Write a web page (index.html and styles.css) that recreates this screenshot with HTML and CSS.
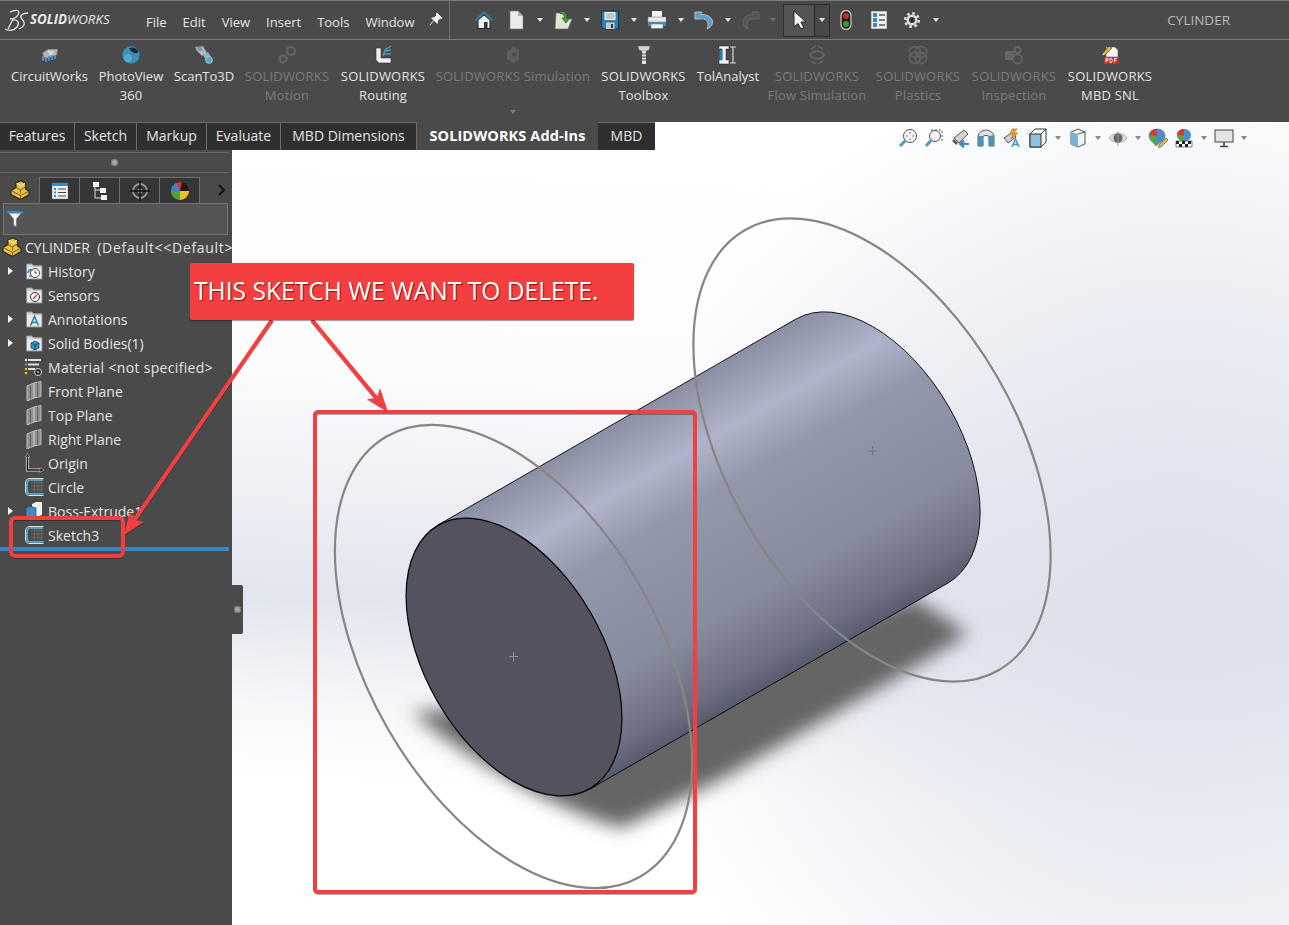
FILE: index.html
```html
<!DOCTYPE html>
<html lang="en">
<head>
  <meta charset="UTF-8" />
  <title>CYLINDER</title>
  <link rel="stylesheet" href="styles.css">
</head>
<body>
  <svg class="defs">
    <symbol id="part" viewBox="0 0 20 20">
      <path d="M1 10.500 L6 7.500 L6 3 L11 0.800 L15.500 3.500 L15.500 9 L19 11.200 L19 14.500 L10.500 19.500 L1 14.500 Z" fill="#ecc044" stroke="#2a2410" stroke-width="1.100" stroke-linejoin="round"/>
      <path d="M1 10.500 L10.500 15.500 L19 11.200 M10.500 15.500 V19.500 M6 7.500 L10.500 10 L15.500 7 M10.500 10 V13.500" fill="none" stroke="#6a5514" stroke-width=".9"/>
      <path d="M6.500 3.300 L11 5.800 L15 3.500" fill="none" stroke="#fff3c0"/>
    </symbol>
    <symbol id="folder" viewBox="0 0 20 20">
      <path d="M2.500 3 H8 L9.500 5 H18 V18 H2.500 Z" fill="#e9e9e9" stroke="#8a8a8a"/>
      <path d="M2.500 5 H18" stroke="#bdbdbd"/>
    </symbol>
    <symbol id="plane" viewBox="0 0 20 20">
      <path d="M3 5 L10 2 V17 L3 20 Z M10 2 L17 0.500 V15.500 L10 17 Z" fill="#8f8f8f" stroke="#bdbdbd"/>
      <path d="M6.500 4 V18.500 M13.500 1.500 V16" stroke="#606060"/>
    </symbol>
    <symbol id="sketch" viewBox="0 0 20 20">
      <path d="M7 5.500 H19 M7 9 H19 M7 12.500 H19 M10.500 4 V15.500 M14 4 V15.500 M17.500 4 V15.500" stroke="#666" stroke-width="1"/>
      <path d="M19.500 1.500 H6 Q1.500 1.500 1.500 6 V14 Q1.500 18.500 6 18.500 H19.500" fill="none" stroke="#d2dde3" stroke-width="1"/>
      <path d="M19 3 H6.500 Q3 3 3 6.500 V13.500 Q3 17 6.500 17 H19.500" fill="none" stroke="#5f9dbd" stroke-width="2"/>
    </symbol>
    <symbol id="caret" viewBox="0 0 6 4">
      <path d="M0 0 H6 L3 4 Z" fill="currentColor"/>
    </symbol>
  </svg>

  <header class="topbar">
    <div class="logo">
      <svg class="logo-mark" viewBox="0 0 26 26" width="26" height="26">
        <path d="M6 5 C12 2 17 3 14 8 C12 11 9 12 6 12 M8 13 C14 12 16 16 13 20 C10 24 4 24 1 22" fill="none" stroke="#e6e6e6" stroke-width="1.300"/>
        <path d="M9 12 L4 22 M24 6 C18 6 15 9 18 12 C21 15 22 19 15 22" fill="none" stroke="#e6e6e6" stroke-width="1.300"/>
      </svg>
      <span class="logo-text"><b>SOLID</b>WORKS</span>
    </div>
    <nav class="menu">
      <span>File</span><span>Edit</span><span>View</span><span>Insert</span><span>Tools</span><span>Window</span>
    </nav>
    <svg class="pin" viewBox="0 0 16 16" width="14" height="14"><path d="M9 1 L15 7 L12 7.500 L9.500 10.500 L9.500 13 L3 7 L6 6.500 L8.500 4 Z M5 10 L1 15" fill="#f2f2f2" stroke="#f2f2f2"/></svg>

    <div class="tools">
      <span class="tool home-tool">
        <svg viewBox="0 0 20 20"><path d="M4 10 V18.500 H16 V10 L10 5 Z" fill="#f2f2f2" stroke="#222"/><rect x="10" y="12" width="3.500" height="6.500" fill="#333"/><path d="M1.500 10.500 L10 2.500 L18.500 10.500" fill="none" stroke="#2f7da6" stroke-width="2.200"/></svg>
      </span>
      <span class="tool">
        <svg viewBox="0 0 20 20"><path d="M4 1 H12 L17 6 V19 H4 Z" fill="#ececec" stroke="#777" stroke-width=".6"/><path d="M12 1 V6 H17 Z" fill="#b5b5b5"/></svg>
      </span>
      <span class="drop"><svg><use href="#caret"/></svg></span>
      <span class="tool">
        <svg viewBox="0 0 20 20"><path d="M3 3 H10 L12 5 V9 L19 9 L15 19 H2 Z" fill="#e4e4d8" stroke="#6a6a60" stroke-width=".7"/><path d="M7 1 C13 1 14 4 14 8 L17 8 L13 13 L9 8 L11.500 8 C11.500 5 10 3.500 7 3.500 Z" fill="#3f9a34" stroke="#17520f" stroke-width=".6"/></svg>
      </span>
      <span class="drop"><svg><use href="#caret"/></svg></span>
      <span class="tool">
        <svg viewBox="0 0 20 20"><path d="M1.500 1 H18.500 V19 H4 L1.500 17 Z" fill="#2d7fb3" stroke="#10344c"/><rect x="4.500" y="2" width="11" height="8" fill="#efefef"/><path d="M6 4 H14 M6 6 H14 M6 8 H14" stroke="#9a9a9a"/><rect x="6" y="12.500" width="8.500" height="6.500" fill="#c9c9c9"/><rect x="11" y="14" width="2" height="4" fill="#333"/></svg>
      </span>
      <span class="drop"><svg><use href="#caret"/></svg></span>
      <span class="tool">
        <svg viewBox="0 0 20 20"><rect x="5" y="1" width="10" height="7" fill="#f2f2f2"/><rect x="1" y="7" width="18" height="5" fill="#e9e9e9" stroke="#777" stroke-width=".5"/><rect x="1" y="12" width="18" height="4" fill="#3a93c8"/><rect x="4" y="14" width="12" height="4.500" fill="#f4f4f4" stroke="#666" stroke-width=".5"/></svg>
      </span>
      <span class="drop"><svg><use href="#caret"/></svg></span>
      <span class="tool">
        <svg viewBox="0 0 20 20"><path d="M1 2 L8 2 L6.500 4.500 C12.500 4 18.500 7 18.500 12 C18.500 15 16 18 13 19 C14.500 16 14.500 13 12.500 10.500 C11 9 8.500 8.500 5.500 9 L1 9 Z" fill="#5b9fcb" stroke="#b9b9b9"/></svg>
      </span>
      <span class="drop"><svg><use href="#caret"/></svg></span>
      <span class="tool">
        <svg viewBox="0 0 20 20"><path d="M18 2 L11 2 L12.500 4.500 C7 4 2 7 2 12 C2 15 4 18 7 19 C5.500 16 5.500 13 7.500 10.500 C9 9 11.500 8.500 14.500 9 L18 9 Z" fill="#555" stroke="#666"/></svg>
      </span>
      <span class="drop drop-off"><svg><use href="#caret"/></svg></span>
      <span class="select-box">
        <span class="select-main">
          <svg viewBox="0 0 20 20" width="20" height="20"><path d="M5 1 V17 L9 13.500 L12 19 L15 18 L12 12 L17 12 Z" fill="#f4f4f4" stroke="#222"/></svg>
        </span>
        <span class="select-drop"><svg><use href="#caret"/></svg></span>
      </span>
      <span class="tool traffic-tool">
        <svg viewBox="0 0 20 20"><rect x="5" y="0.500" width="10" height="19" rx="5" fill="#222" stroke="#c4c4c4" stroke-width="1.300"/><circle cx="10" cy="6" r="3" fill="#c82a24"/><circle cx="10" cy="14" r="3" fill="#3b9a2c"/></svg>
      </span>
      <span class="tool list-tool">
        <svg viewBox="0 0 20 20"><rect x="2" y="1" width="16" height="18" fill="#f0f0f0" stroke="#555" stroke-width=".6"/><path d="M4 3 H8 V7 H4 Z M4 8 H8 V12 H4 Z M4 13 H8 V17 H4 Z" fill="#3a86bb"/><path d="M10 5 H16 M10 10 H16 M10 15 H16" stroke="#555" stroke-width="1.300"/></svg>
      </span>
      <span class="tool gear-tool">
        <svg viewBox="0 0 20 20"><circle cx="10" cy="10" r="6.800" fill="none" stroke="#dcdcdc" stroke-width="2.600" stroke-dasharray="2.700 2.640"/><circle cx="10" cy="10" r="4.300" fill="none" stroke="#dcdcdc" stroke-width="2.600"/><circle cx="10" cy="10" r="2.500" fill="#333"/></svg>
      </span>
      <span class="drop"><svg><use href="#caret"/></svg></span>
    </div>
    <div class="doc-title">CYLINDER</div>
  </header>

  <section class="ribbon">
    <div class="addin">
      <svg viewBox="0 0 20 20"><path d="M2 8 L8 4 H18 L17 10 L5 14 Z" fill="#b4b4b4" stroke="#555" stroke-width=".6"/><path d="M3 11 V16 M6 12 V17 M9 11 V16 M12 10 V15 M15 10 V14" stroke="#4a9cc9" stroke-width="1.700"/><path d="M8 7 H14 M9 9 H13" stroke="#f2f2f2"/></svg>
      <span>CircuitWorks</span>
    </div>
    <div class="addin">
      <svg viewBox="0 0 20 20"><circle cx="10" cy="10" r="9" fill="#3e8fb8" stroke="#244f66" stroke-width=".6"/><path d="M8 3.500 C11 1.500 16 3 17.500 7 C15 9.500 11 8 8 3.500 Z" fill="#1d2a32"/><circle cx="7" cy="13" r="4" fill="#6fb9dc" opacity=".6"/></svg>
      <span>PhotoView<br>360</span>
    </div>
    <div class="addin">
      <svg viewBox="0 0 20 20"><path d="M1 2 L9 1 L13 8 L8 11 L3 6 Z" fill="#b9b9b9" stroke="#666" stroke-width=".5"/><path d="M3 3 L8 3 M4 5 L9 5" stroke="#3a86bb"/><path d="M9 10 L14 7 L17 12 L12 15 Z" fill="#7fb4cf"/><circle cx="15" cy="15" r="3.500" fill="#5fa3c7" stroke="#d8d8d8" stroke-width=".6"/></svg>
      <span>ScanTo3D</span>
    </div>
    <div class="addin sw is-off">
      <svg viewBox="0 0 20 20"><circle cx="14" cy="6" r="4" fill="none" stroke="#636363" stroke-width="2.400"/><circle cx="6" cy="14" r="3.500" fill="none" stroke="#636363" stroke-width="2.400"/></svg>
      <span>SOLIDWORKS<br>Motion</span>
    </div>
    <div class="addin sw">
      <svg viewBox="0 0 20 20"><path d="M3 3 H8 V13 H18 V18 H6 L3 15 Z" fill="#f0f0f0" stroke="#333" stroke-width=".6"/><path d="M10 11 L12 5 L18 1 M12 6 L18 5 M11 9 L18 9" fill="none" stroke="#4a9cc9" stroke-width="1.300"/></svg>
      <span>SOLIDWORKS<br>Routing</span>
    </div>
    <div class="addin sw is-off">
      <svg viewBox="0 0 20 20"><path d="M4 7 L10 2 L16 5 V15 L10 18 L4 14 Z" fill="#5e5e5e"/><path d="M10 7 L13 9 V12 L9 10 Z" fill="#494949"/></svg>
      <span>SOLIDWORKS Simulation</span>
      <svg class="more"><use href="#caret"/></svg>
    </div>
    <div class="addin sw">
      <svg viewBox="0 0 20 20"><path d="M4 1 H16 L15 5 L12 6 H8 L5 5 Z" fill="#d6d6d6" stroke="#666" stroke-width=".5"/><rect x="8" y="6" width="4" height="13" fill="#e2e2e2"/><path d="M8 9 H12 M8 12 H12 M8 15 H12" stroke="#444" stroke-width="1.200"/></svg>
      <span>SOLIDWORKS<br>Toolbox</span>
    </div>
    <div class="addin">
      <svg viewBox="0 0 20 20"><path d="M1 1 H11 V4 H8 V15 H11 V19 H1 V15 H4 V4 H1 Z" fill="#f2f2f2" stroke="#222" stroke-width=".5"/><rect x="1.500" y="5" width="3" height="10" fill="#2c7fb5"/><path d="M15 2 V18 M12 2 H18 M12 18 H18" stroke="#d8d8d8" stroke-width="1.200"/></svg>
      <span>TolAnalyst</span>
    </div>
    <div class="addin sw is-off">
      <svg viewBox="0 0 20 20"><path d="M3 10 C6 5 14 5 17 10 C14 15 6 15 3 10 Z" fill="none" stroke="#626262" stroke-width="2"/><path d="M4 4 L9 1 M16 4 L11 1 M4 16 L9 19 M16 16 L11 19" stroke="#626262" stroke-width="1.600"/></svg>
      <span>SOLIDWORKS<br>Flow Simulation</span>
    </div>
    <div class="addin sw is-off">
      <svg viewBox="0 0 20 20"><circle cx="7" cy="7" r="5.500" fill="none" stroke="#606060" stroke-width="1.800"/><circle cx="13" cy="7" r="5.500" fill="none" stroke="#606060" stroke-width="1.800"/><circle cx="7" cy="13" r="5.500" fill="none" stroke="#606060" stroke-width="1.800"/><circle cx="13" cy="13" r="5.500" fill="none" stroke="#606060" stroke-width="1.800"/></svg>
      <span>SOLIDWORKS<br>Plastics</span>
    </div>
    <div class="addin sw is-off">
      <svg viewBox="0 0 20 20"><rect x="1" y="6" width="9" height="9" fill="#666"/><circle cx="13.500" cy="5" r="3" fill="none" stroke="#666" stroke-width="1.800"/><circle cx="13.500" cy="14" r="4.500" fill="none" stroke="#666" stroke-width="1.800"/></svg>
      <span>SOLIDWORKS<br>Inspection</span>
    </div>
    <div class="addin sw">
      <svg viewBox="0 0 20 20"><path d="M6 2 H15 L18 5 V12 H6 Z" fill="#f4f4f4" stroke="#555" stroke-width=".5"/><path d="M1 10 L9 1 L12 3 L4 11 Z" fill="#e5b53a" stroke="#222" stroke-width=".6"/><rect x="4" y="12" width="15" height="7" fill="#d9261c"/><path d="M6 17.500 V13.500 H8 V15.500 H6 M10 13.500 V17.500 H11.500 L12.500 15.500 L11.500 13.500 Z M14.500 17.500 V13.500 H17 M14.500 15.500 H16.500" fill="none" stroke="#fff" stroke-width=".9"/></svg>
      <span>SOLIDWORKS<br>MBD SNL</span>
    </div>
  </section>

  <main class="workspace">
    <svg class="viewport" viewBox="0 122 1289 803">
      <defs>
        <linearGradient id="bg" gradientUnits="userSpaceOnUse" x1="800" y1="150" x2="770" y2="925">
          <stop offset="0" stop-color="#fff"/>
          <stop offset=".3" stop-color="#fcfcfd"/>
          <stop offset=".6" stop-color="#e1e5ee"/>
          <stop offset=".74" stop-color="#f6f7f9"/>
          <stop offset=".84" stop-color="#fff"/>
        </linearGradient>
        <radialGradient id="tint" gradientUnits="userSpaceOnUse" cx="1180" cy="600" r="560">
          <stop offset="0" stop-color="#dde1ec"/>
          <stop offset=".55" stop-color="#dde1ec" stop-opacity=".55"/>
          <stop offset="1" stop-color="#dde1ec" stop-opacity="0"/>
        </radialGradient>
        <linearGradient id="body" gradientUnits="userSpaceOnUse" x1="796" y1="319" x2="948" y2="583">
          <stop offset="0" stop-color="#8b8fa4"/>
          <stop offset=".2" stop-color="#b0b4ca"/>
          <stop offset=".36" stop-color="#9397ab"/>
          <stop offset=".72" stop-color="#878b9e"/>
          <stop offset=".92" stop-color="#6d7083"/>
          <stop offset="1" stop-color="#585b6e"/>
        </linearGradient>
        <filter id="soft" x="-10%" y="-10%" width="120%" height="120%"><feGaussianBlur stdDeviation="9"/></filter>
      </defs>
      <rect x="0" y="122" width="1289" height="803" fill="url(#bg)"/>
      <rect x="0" y="122" width="1289" height="803" fill="url(#tint)"/>

      <path d="M412 712 C450 745 540 805 622 828 L720 780 L893 680 L968 634 L915 598 L600 700 Z" fill="#656565" filter="url(#soft)"/>

      <path d="M438 525 L796 319 A152 88.500 60 0 1 948 583 L590 789 Z" fill="url(#body)" stroke="#000" stroke-width=".9"/>
      <ellipse cx="514" cy="657" rx="152" ry="88.500" transform="rotate(60 514 657)" fill="#52535f" stroke="#000" stroke-width="1.200"/>

      <path d="M509 656.500 H518 M513.500 652 V661" stroke="#8d8d92" stroke-width="1"/>
      <path d="M868 451 H877 M872.500 446.500 V455.500" stroke="#77777a" stroke-width="1"/>

      <ellipse cx="513.500" cy="656.500" rx="254" ry="145" transform="rotate(60 513.500 656.500)" fill="none" stroke="#868683" stroke-width="2.200"/>
      <ellipse cx="872" cy="450" rx="254" ry="145" transform="rotate(60 872 450)" fill="none" stroke="#868683" stroke-width="2.200"/>
    </svg>

    <div class="tabbar">
      <div class="tabs">
        <span class="tab">Features</span>
        <span class="tab">Sketch</span>
        <span class="tab">Markup</span>
        <span class="tab">Evaluate</span>
        <span class="tab">MBD Dimensions</span>
        <span class="tab tab-active">SOLIDWORKS Add-Ins</span>
        <span class="tab">MBD</span>
      </div>
      <div class="hud">
        <span class="hud-btn"><svg viewBox="0 0 20 20"><circle cx="12" cy="8" r="6.500" fill="#f4f4f4" stroke="#555"/><path d="M12 4 V5.500 M12 10.500 V12 M8 8 H9.500 M14.500 8 H16" stroke="#555"/><path d="M7.500 12.500 L2 18" stroke="#4d9ac2" stroke-width="3"/></svg></span>
        <span class="hud-btn"><svg viewBox="0 0 20 20"><path d="M7 2 H18 V13" fill="none" stroke="#555" stroke-dasharray="2 2"/><circle cx="11" cy="8" r="5.500" fill="#f4f4f4" stroke="#555"/><path d="M7 12.500 L2 18" stroke="#4d9ac2" stroke-width="3"/></svg></span>
        <span class="hud-btn"><svg viewBox="0 0 20 20"><path d="M4 10 L14 2 L18 6 L9 15 Z" fill="#d2d2d2" stroke="#555"/><path d="M3 12 L7 16" stroke="#555" stroke-width="2.500"/><path d="M19 16 H11 M14 12.500 L10 16 L14 19.500" fill="#3c8dbb" stroke="#3c8dbb" stroke-width="2"/></svg></span>
        <span class="hud-btn"><svg viewBox="0 0 20 20"><path d="M2 9 C2 3 9 2 10 2 C11 2 18 3 18 9 V18 H13 V9 C13 7 7 7 7 9 V18 H2 Z" fill="#d8e0e6" stroke="#555"/><path d="M13 8 L18 7 V18 H13 Z M2 8 L7 8 V18 H2 Z" fill="#4c93bc"/></svg></span>
        <span class="hud-btn"><svg viewBox="0 0 20 20"><path d="M2 10 L11 4 L14 9 L6 15 Z" fill="#d2d2d2" stroke="#555"/><path d="M10 1 L15 1 L12 5 L16 5 L9 11 L11 6 L8 6 Z" fill="#e8a32e" stroke="#8a5a10" stroke-width=".5"/><path d="M10 19 L13.500 11 L17 19 M11.500 16.500 H15.500" fill="none" stroke="#3f8fbd" stroke-width="1.400"/></svg></span>
        <span class="hud-btn"><svg viewBox="0 0 20 20"><path d="M2 6 L7 1 H18 V14 L13 19 H2 Z" fill="#fff" stroke="#333"/><rect x="2" y="6" width="11" height="13" fill="#8fc0dc" stroke="#333"/><path d="M13 6 L18 1" stroke="#333"/></svg></span>
        <span class="hud-drop"><svg><use href="#caret"/></svg></span>
        <span class="hud-btn"><svg viewBox="0 0 20 20"><path d="M3 4 L10 1 L17 4 V16 L10 19 L3 16 Z" fill="#f2f2f2" stroke="#555"/><path d="M3 4 L10 6 V19 L3 16 Z" fill="#79b2d2"/><path d="M10 6 L17 4" stroke="#555"/></svg></span>
        <span class="hud-drop"><svg><use href="#caret"/></svg></span>
        <span class="hud-btn"><svg viewBox="0 0 20 20"><path d="M1 10 C5 4 15 4 19 10 C15 16 5 16 1 10 Z" fill="#dcdcdc" stroke="#aaa"/><circle cx="10" cy="10" r="4.500" fill="#666"/><path d="M10 3 V18" stroke="#999"/></svg></span>
        <span class="hud-drop"><svg><use href="#caret"/></svg></span>
        <span class="hud-btn"><svg viewBox="0 0 20 20"><path d="M9 1 C14 1 17 4 17 8 C17 12 11 15 8 18 C6 15 1 12 1 8 C1 4 4 1 9 1 Z" fill="#4b8fd0" stroke="#555" stroke-width=".5"/><path d="M9 1 C5 1 2 3 1.500 7 L9 8 Z" fill="#d83a30"/><path d="M1.500 8 L9 8 L8 18 C6 15 2 12 1.500 8 Z" fill="#56a845"/><path d="M11 17 L18 10 L20 12 L13 19 L10.500 19.500 Z" fill="#e6bd4c" stroke="#444" stroke-width=".6"/></svg></span>
        <span class="hud-btn"><svg viewBox="0 0 20 20"><path d="M10 1 C14 1 17 3.500 17 7.500 C17 10 15 12 13 13 H7 C5 12 3 10 3 7.500 C3 3.500 6 1 10 1 Z" fill="#4b8fd0"/><path d="M10 1 C6 1 3 3.500 3 7 L10 7.500 Z" fill="#d83a30"/><path d="M3 8 L10 8 L10 13 H7 C5 12 3.500 10 3 8 Z" fill="#56a845"/><path d="M2 13 H18 V19 H2 Z" fill="#fff" stroke="#333" stroke-width=".6"/><path d="M2 13 H5 V16 H2 Z M8 13 H11 V16 H8 Z M14 13 H17 V16 H14 Z M5 16 H8 V19 H5 Z M11 16 H14 V19 H11 Z" fill="#222"/></svg></span>
        <span class="hud-drop"><svg><use href="#caret"/></svg></span>
        <span class="hud-btn"><svg viewBox="0 0 20 20"><rect x="1" y="2" width="18" height="12" fill="#e4e4e4" stroke="#444"/><path d="M10 14 V18 M6 18.500 H14" stroke="#444" stroke-width="1.600"/></svg></span>
        <span class="hud-drop"><svg><use href="#caret"/></svg></span>
      </div>
    </div>

    <aside class="panel">
      <div class="panel-grip"><span class="dot"></span></div>
      <div class="panel-tabs">
        <span class="ptab ptab-active"><svg viewBox="0 0 20 20"><use href="#part"/></svg></span>
        <span class="ptab"><svg viewBox="0 0 20 20"><rect x="2" y="2" width="16" height="16" fill="#f1f1f1" stroke="#666" stroke-width=".5"/><rect x="2" y="2" width="16" height="3" fill="#2f8fc4"/><path d="M4 8 H6 M4 11.500 H6 M4 15 H6" stroke="#2f8fc4" stroke-width="2"/><path d="M8 8 H16 M8 11.500 H16 M8 15 H16" stroke="#444" stroke-width="1.200"/></svg></span>
        <span class="ptab"><svg viewBox="0 0 20 20"><rect x="3" y="1" width="6" height="5" fill="#f2f2f2"/><rect x="10" y="7" width="6" height="5" fill="#f2f2f2"/><rect x="11" y="14" width="6" height="5" fill="#f2f2f2"/><path d="M5 6 V17 H11 M5 9 H10" fill="none" stroke="#e4e4e4"/></svg></span>
        <span class="ptab"><svg viewBox="0 0 20 20"><circle cx="10" cy="10" r="7" fill="none" stroke="#999" stroke-width="1.800"/><circle cx="10" cy="10" r="2.500" fill="#999"/><path d="M10 0 V20 M0 10 H20" stroke="#111" stroke-width="1.400"/></svg></span>
        <span class="ptab"><svg viewBox="0 0 20 20"><circle cx="10" cy="10" r="9" fill="#d33"/><path d="M10 10 L1 10 A9 9 0 0 0 10 19 Z" fill="#4aa33c"/><path d="M10 10 L10 19 A9 9 0 0 0 19 10 Z" fill="#e8c12c"/><path d="M10 10 L19 10 A9 9 0 0 0 12 1 Z" fill="#1a1a1a"/><path d="M10 10 L1 10 A9 9 0 0 1 6 2 Z" fill="#3d7fc9"/></svg></span>
        <svg class="ptab-more" viewBox="0 0 8 12" width="8" height="12"><path d="M2 1 L7 6 L2 11" fill="none" stroke="#111" stroke-width="1.800"/></svg>
      </div>
      <div class="filter">
        <svg viewBox="0 0 20 20" width="20" height="20"><path d="M2 2 H18 L11.500 10 V18 L8.500 16 V10 Z" fill="#f1f1f1" stroke="#555" stroke-width=".5"/><rect x="2" y="2" width="16" height="2.500" fill="#2f8fc4"/></svg>
      </div>
      <ul class="tree">
        <li class="row root"><svg class="ico" viewBox="0 0 20 20"><use href="#part"/></svg><span>CYLINDER  <span class="wide">(Default&lt;&lt;Default&gt;</span></span></li>
        <li class="row has-kids"><svg class="ico" viewBox="0 0 20 20"><use href="#folder"/><circle cx="11" cy="12" r="4.500" fill="#fff" stroke="#444"/><path d="M11 9.500 V12 H13" stroke="#444" fill="none"/><path d="M4 12 C4 9 7 8 8 9 L6 10 M5 15 L8 15" stroke="#3a86bb" stroke-width="1.500" fill="none"/></svg><span>History</span></li>
        <li class="row"><svg class="ico" viewBox="0 0 20 20"><use href="#folder"/><circle cx="11" cy="12" r="4.500" fill="#fff" stroke="#333"/><path d="M9 14 L13 10" stroke="#d0342a" stroke-width="1.500"/></svg><span>Sensors</span></li>
        <li class="row has-kids"><svg class="ico" viewBox="0 0 20 20"><use href="#folder"/><path d="M6.500 16.500 L10.500 7.500 L14.500 16.500 M8 13.500 H13" fill="none" stroke="#2f7fb3" stroke-width="1.600"/></svg><span>Annotations</span></li>
        <li class="row has-kids"><svg class="ico" viewBox="0 0 20 20"><use href="#folder"/><path d="M7 10 L11 8 L15 10 V15 L11 17 L7 15 Z" fill="#3a8dbd" stroke="#123f5b" stroke-width=".7"/><path d="M7 10 L11 12 L15 10 M11 12 V17" fill="none" stroke="#123f5b" stroke-width=".7"/></svg><span>Solid Bodies(1)</span></li>
        <li class="row"><svg class="ico" viewBox="0 0 20 20"><path d="M4 3 H17 M4 7.500 H15 M4 12 H11" stroke="#ddd" stroke-width="2.200"/><circle cx="2" cy="3" r="1.300" fill="#ddd"/><circle cx="2" cy="7.500" r="1.300" fill="#4d9ac2"/><circle cx="2" cy="12" r="1.300" fill="#e8b93a"/><circle cx="2" cy="16" r="1.300" fill="#e8b93a"/><circle cx="14" cy="15" r="3.500" fill="#222" stroke="#ddd"/><circle cx="14" cy="15" r="1" fill="#ddd"/></svg><span class="wide-some">Material &lt;not specified&gt;</span></li>
        <li class="row"><svg class="ico" viewBox="0 0 20 20"><use href="#plane"/></svg><span>Front Plane</span></li>
        <li class="row"><svg class="ico" viewBox="0 0 20 20"><use href="#plane"/></svg><span>Top Plane</span></li>
        <li class="row"><svg class="ico" viewBox="0 0 20 20"><use href="#plane"/></svg><span>Right Plane</span></li>
        <li class="row"><svg class="ico" viewBox="0 0 20 20"><path d="M3.500 3 V17 H18" fill="none" stroke="#ddd" stroke-width="3.200"/><path d="M3.500 3 V17 H17" fill="none" stroke="#111" stroke-width="1.500"/><path d="M1.500 4 L3.500 0.500 L5.500 4 Z M16 14.500 L20 17 L16 19.500 Z" fill="#111" stroke="#ddd" stroke-width=".5"/></svg><span>Origin</span></li>
        <li class="row"><svg class="ico" viewBox="0 0 20 20"><use href="#sketch"/></svg><span>Circle</span></li>
        <li class="row has-kids"><svg class="ico" viewBox="0 0 20 20"><path d="M8 3 L12 1 H18 V14 L8 17 Z" fill="#f2f2f2"/><path d="M2 7 L6 5 L12 7 V18 L7 20 L2 18 Z" fill="#3a8dbd" stroke="#123f5b" stroke-width=".6"/></svg><span>Boss-Extrude1</span></li>
        <li class="row"><svg class="ico" viewBox="0 0 20 20"><use href="#sketch"/></svg><span>Sketch3</span></li>
        <li class="rollback"></li>
      </ul>
      <div class="handle"><span class="dot"></span></div>
    </aside>
  </main>

  <svg class="marks" viewBox="0 0 1289 925">
    <path d="M272 320 L131 525 M312 320 L383 406" fill="none" stroke="#f33f3f" stroke-width="4"/>
    <path d="M124 535 L144 522 L134 520 L130 511 Z M388 412 L380 388 L377 398 L367 399 Z" fill="#f33f3f"/>
    <rect x="315" y="412" width="380" height="480" rx="3" fill="none" stroke="#f33f3f" stroke-width="4"/>
    <rect x="11" y="518" width="112" height="38" rx="4" fill="none" stroke="#f33f3f" stroke-width="4"/>
  </svg>
  <div class="callout">THIS SKETCH WE WANT TO DELETE.</div>
</body>
</html>
```

FILE: styles.css
```css
html, body {
  margin: 0;
  padding: 0;
  height: 100%;
  overflow: hidden;
  background: #4a4a4a;
  color: #e4e4e4;
  font-family: "Open Sans", "Noto Sans", sans-serif;
  font-size: 13px;
}

body {
  position: relative;
  display: flex;
  flex-direction: column;
}

.defs {
  position: absolute;
  width: 0;
  height: 0;
}

/* top bar */
.topbar {
  display: flex;
  align-items: center;
  flex: none;
  box-sizing: border-box;
  height: 40px;
  border-top: 1px solid #787878;
  border-bottom: 1px solid #7c7c7c;
}

.logo {
  display: flex;
  align-items: center;
  width: 146px;
  padding-left: 4px;
  box-sizing: border-box;
}

.logo-text {
  font-size: 13.3px;
  font-style: italic;
  color: #e8e8e8;
  margin-bottom: 2px;
}

.menu {
  display: flex;
  gap: 16px;
  width: 280px;
  padding-top: 3px;
}

.pin {
  margin-left: 3px;
  margin-bottom: 3px;
}

.tools {
  display: flex;
  align-items: center;
  box-sizing: border-box;
  height: 38px;
  margin-left: 6px;
  padding-left: 22px;
  border-left: 1px solid #6f6f6f;
}

.tool {
  display: flex;
  justify-content: center;
  align-items: center;
  width: 24px;
  height: 24px;
}

.tool svg {
  width: 20px;
  height: 20px;
}

.home-tool {
  margin-right: 8px;
}

.drop {
  display: flex;
  justify-content: center;
  align-items: center;
  width: 23px;
  color: #e6e6e6;
}

.drop svg,
.select-drop svg,
.hud-drop svg,
.more {
  width: 6px;
  height: 4px;
}

.drop-off {
  width: 20px;
  color: #6e6e6e;
}

.select-box {
  display: flex;
  box-sizing: border-box;
  width: 47px;
  height: 33px;
  border: 1px solid #2e2e2e;
  background: #545454;
}

.select-main {
  display: flex;
  justify-content: center;
  align-items: center;
  flex: 1;
}

.select-drop {
  display: flex;
  justify-content: center;
  align-items: center;
  width: 14px;
  border-left: 1px solid #2a2a2a;
  background: #484848;
}

.traffic-tool {
  margin-left: 4px;
}

.list-tool,
.gear-tool {
  margin-left: 9px;
}

.doc-title {
  margin-left: auto;
  padding-right: 59px;
  color: #b9b9b9;
  font-size: 13.5px;
}

/* add-ins ribbon */
.ribbon {
  display: grid;
  grid-template-columns: 77px 66px 60px 86px 86px 154px 87px 62px 96px 86px 86px 86px;
  column-gap: 10px;
  flex: none;
  box-sizing: border-box;
  height: 82px;
  padding: 5px 0 0 11px;
}

.addin {
  position: relative;
  display: flex;
  flex-direction: column;
  align-items: center;
  text-align: center;
  line-height: 19px;
  white-space: nowrap;
}

.sw {
  letter-spacing: 0.2px;
}

.addin > svg:first-child {
  width: 20px;
  height: 20px;
  margin-bottom: 2px;
}

.is-off {
  color: #7b7b7b;
}

.more {
  position: absolute;
  left: 74px;
  bottom: 8px;
  color: #7b7b7b;
}

/* workspace */
.workspace {
  position: relative;
  flex: 1;
  display: flex;
  flex-direction: column;
  min-height: 0;
}

.viewport {
  position: absolute;
  left: 0;
  top: 0;
  width: 1289px;
  height: 803px;
}

.tabbar {
  position: relative;
  display: flex;
  flex: none;
  height: 28px;
}

.tabs {
  display: flex;
  width: 655px;
  flex: none;
}

.tab {
  display: flex;
  justify-content: center;
  align-items: center;
  box-sizing: border-box;
  padding-bottom: 2px;
  border-top: 1px solid #6e6e6e;
  border-right: 1px solid #6e6e6e;
  background: #2f2f2f;
  color: #e4e4e4;
  font-size: 14px;
  white-space: nowrap;
}

.tab:nth-child(1) { width: 75px; }
.tab:nth-child(2) { width: 62px; }
.tab:nth-child(3) { width: 70px; }
.tab:nth-child(4) { width: 74px; }
.tab:nth-child(5) { width: 136px; }
.tab:nth-child(6) { width: 181px; }
.tab:nth-child(7) { width: 57px; border-right: 0; }

.tab-active {
  border-top: 0;
  border-right: 0;
  background: #4a4a4a;
  color: #fff;
  font-size: 14.5px;
  font-weight: 700;
  letter-spacing: 0.1px;
}

.hud {
  display: flex;
  align-items: center;
  margin-left: 240px;
  padding-top: 4px;
}

.hud-btn {
  display: flex;
  justify-content: center;
  align-items: center;
  width: 26px;
}

.hud-btn svg {
  width: 20px;
  height: 20px;
}

.hud-drop {
  display: flex;
  justify-content: center;
  width: 14px;
  color: #888;
}

/* feature manager */
.panel {
  position: relative;
  flex: 1;
  width: 232px;
  box-sizing: border-box;
  background: #4a4a4a;
  font-size: 14px;
}

.panel-grip {
  display: flex;
  justify-content: center;
  align-items: center;
  box-sizing: border-box;
  height: 21px;
  margin: 2px 3px 0 0;
  border-top: 1px solid #666;
  border-bottom: 1px solid #666;
}

.dot {
  display: block;
  width: 7px;
  height: 7px;
  border-radius: 50%;
  background: #a4a4a4;
  box-shadow: inset 0 0 0 1px #777;
}

.panel-tabs {
  position: relative;
  display: flex;
  margin-top: 4px;
  height: 26px;
}

.ptab {
  display: flex;
  justify-content: center;
  align-items: center;
  box-sizing: border-box;
  width: 40px;
  background: #363636;
  border-top: 1px solid #6e6e6e;
  border-right: 1px solid #6e6e6e;
}

.ptab svg {
  width: 20px;
  height: 20px;
}

.ptab-active {
  background: #4a4a4a;
  border-top: 0;
}

.ptab-more {
  position: absolute;
  left: 217px;
  top: 7px;
}

.filter {
  display: flex;
  align-items: center;
  box-sizing: border-box;
  height: 32px;
  margin: 0 4px 0 3px;
  padding-left: 1px;
  background: #555;
  border: 1px solid #757575;
}

.tree {
  list-style: none;
  margin: 0;
  padding: 0;
}

.row {
  position: relative;
  display: flex;
  align-items: center;
  height: 24px;
  width: 232px;
  padding-left: 24px;
  box-sizing: border-box;
  white-space: pre;
}

.row .ico {
  flex: none;
  width: 20px;
  height: 20px;
  margin-right: 4px;
}

.root {
  padding-left: 2px;
}

.root .ico {
  margin-right: 3px;
}

.wide {
  letter-spacing: 0.7px;
}

.wide-some {
  letter-spacing: 0.33px;
}

.has-kids::before {
  content: "";
  position: absolute;
  left: 8px;
  top: 8px;
  border-left: 5px solid #eee;
  border-top: 4px solid transparent;
  border-bottom: 4px solid transparent;
}

.rollback {
  height: 4px;
  width: 229px;
  background: #3a86bf;
}

.handle {
  position: absolute;
  left: 231px;
  top: 435px;
  display: flex;
  justify-content: center;
  align-items: center;
  width: 12px;
  height: 49px;
  background: #4a4a4a;
  border-radius: 0 2px 2px 0;
}

/* annotations on top of the screenshot */
.marks {
  position: absolute;
  left: 0;
  top: 0;
  width: 1289px;
  height: 925px;
  pointer-events: none;
  filter: drop-shadow(0 1px 0 rgba(0, 0, 0, 0.3));
}

.callout {
  position: absolute;
  left: 190px;
  top: 263px;
  box-sizing: border-box;
  width: 444px;
  height: 57px;
  padding-left: 4px;
  line-height: 55px;
  font-size: 24.6px;
  white-space: nowrap;
  color: #fff;
  background: #f33f3f;
  border-radius: 2px;
  box-shadow: 0 1px 1px rgba(0, 0, 0, 0.4);
  text-shadow: 1px 1px 1px rgba(90, 0, 0, 0.7);
}
```
